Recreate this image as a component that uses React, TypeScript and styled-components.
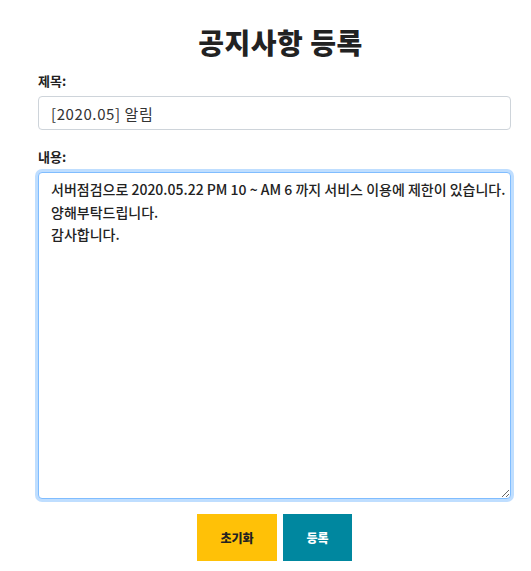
import React, { useEffect, useRef } from "react";
import styled, { createGlobalStyle } from "styled-components";

const Global = createGlobalStyle`
  html, body { margin: 0; padding: 0; background: #fff; }
  body { font-family: "Noto Sans CJK KR", "Noto Sans", sans-serif; color: #212529; }
  * { box-sizing: border-box; }
`;

const Page = styled.div`
  width: 531px;
  padding: 22px 20px 0 38px;
  display: flex;
  flex-direction: column;
`;

const Title = styled.h1`
  margin: 0 0 10px;
  padding-left: 12px;
  text-align: center;
  font-size: 28px;
  font-weight: 900;
  line-height: 40px;
  color: #222;
  letter-spacing: 0.5px;
`;

const Field = styled.div<{ $mb: number }>`
  display: flex;
  flex-direction: column;
  margin-bottom: ${(p) => p.$mb}px;
`;

const Label = styled.label`
  font-size: 13px;
  font-weight: 700;
  line-height: 18px;
  margin-bottom: 6px;
  color: #222;
`;

const Input = styled.input`
  height: 34px;
  padding: 0 12px;
  border: 1px solid #ced4da;
  border-radius: 4px;
  font-family: inherit;
  font-size: 15px;
  letter-spacing: 0.6px;
  color: #333;
  outline: none;
`;

const TextArea = styled.textarea`
  height: 327px;
  padding: 5px 8px 5px 12px;
  border: 1px solid #80bdff;
  border-radius: 4px;
  box-shadow: 0 0 0 3px rgba(0, 123, 255, 0.25);
  font-family: inherit;
  font-size: 14px;
  font-weight: 500;
  line-height: 22.5px;
  color: #222;
  outline: none;
  resize: vertical;
  overflow: hidden;
  white-space: pre;
`;

const Buttons = styled.div`
  display: flex;
  justify-content: center;
  gap: 6px;
  margin-top: 15px;
`;

const Button = styled.button<{ $bg: string; $fg: string; $w: number }>`
  width: ${(p) => p.$w}px;
  height: 47px;
  border: none;
  border-radius: 0;
  background: ${(p) => p.$bg};
  color: ${(p) => p.$fg};
  font-family: inherit;
  font-size: 12px;
  font-weight: 900;
  cursor: pointer;
`;

const content =
  "서버점검으로 2020.05.22 PM 10 ~ AM 6 까지 서비스 이용에 제한이 있습니다.\n양해부탁드립니다.\n감사합니다.";

export default function App() {
  const ref = useRef<HTMLTextAreaElement>(null);
  useEffect(() => {
    const el = ref.current;
    if (el) {
      el.focus();
      const i = content.indexOf("\n");
      el.setSelectionRange(i, i);
      el.scrollLeft = 0;
    }
  }, []);
  return (
    <>
      <Global />
      <Page>
        <Title>공지사항 등록</Title>
        <Field $mb={18}>
          <Label>제목:</Label>
          <Input defaultValue="[2020.05] 알림" />
        </Field>
        <Field $mb={0}>
          <Label>내용:</Label>
          <TextArea ref={ref} wrap="off" defaultValue={content} />
        </Field>
        <Buttons>
          <Button $bg="#ffc107" $fg="#222" $w={80}>초기화</Button>
          <Button $bg="#00879f" $fg="#fff" $w={69}>등록</Button>
        </Buttons>
      </Page>
    </>
  );
}
